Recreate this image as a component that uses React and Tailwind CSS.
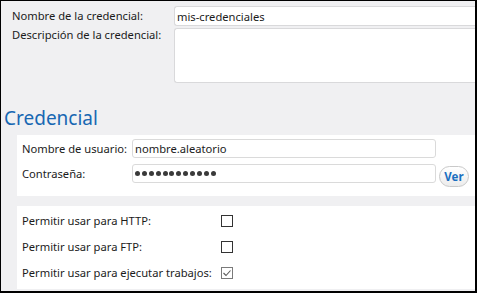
import { useState } from "react";

const font = { fontFamily: '"Noto Sans", "Open Sans", sans-serif' };

function Check({ checked }) {
  return (
    <span
      className={`flex h-[12px] w-[12px] items-center justify-center bg-white border ${
        checked ? "border-[#7a7a7a]" : "border-[#333333]"
      }`}
    >
      {checked && (
        <svg width="10" height="10" viewBox="0 0 10 10" fill="none">
          <polyline points="1.5,5 4,7.5 8.5,2.5" stroke="#5a5a5a" strokeWidth="1.1" />
        </svg>
      )}
    </span>
  );
}

export default function App() {
  const [perms] = useState([
    { label: "Permitir usar para HTTP:", checked: false },
    { label: "Permitir usar para FTP:", checked: false },
    { label: "Permitir usar para ejecutar trabajos:", checked: true },
  ]);

  return (
    <div
      className="w-[477px] h-[293px] overflow-hidden bg-[#f0f0f2] border-t border-l border-r-2 border-b-2 border-black text-[11.2px] text-[#1b1b1b] whitespace-nowrap"
      style={font}
    >
      {/* CREDENTIAL NAME + DESCRIPTION */}
      <div className="pt-[5px]">
        <div className="flex items-center h-[20px]">
          <span className="w-[173px] pl-[11px] leading-[20px]">Nombre de la credencial:</span>
          <input
            readOnly
            defaultValue="mis-credenciales"
            className="flex-1 h-[20px] bg-white border border-r-0 border-[#d9d9db] rounded-l-[3px] pl-[2px] outline-none leading-[18px]"
          />
        </div>

        <div className="flex mt-[2px]">
          <span className="w-[173px] pl-[11px] leading-[16px] -mt-[1px]">Descripción de la credencial:</span>
          <textarea
            readOnly
            className="flex-1 h-[55px] bg-white border border-r-0 border-[#d9d9db] rounded-l-[3px] outline-none resize-none"
          />
        </div>
      </div>

      {/* CREDENCIAL */}
      <h2 className="mt-[23px] pl-[3px] text-[19px] leading-[24px] text-[#1767b2]">Credencial</h2>

      <div className="mt-[5px] ml-[16px] bg-white pt-[4px] pb-[9px] pl-[5px]">
        <div className="flex items-center">
          <span className="w-[110px] leading-[19px]">Nombre de usuario:</span>
          <input
            readOnly
            defaultValue="nombre.aleatorio"
            className="w-[304px] h-[19px] border border-[#dadada] rounded-[3px] pl-[2px] outline-none leading-[17px]"
          />
        </div>

        <div className="flex items-start mt-[6px]">
          <span className="w-[110px] leading-[19px]">Contraseña:</span>
          <div className="w-[304px] h-[19px] border border-[#dadada] rounded-[3px] pl-[2px] flex items-center gap-[1.9px]">
            {Array.from({ length: 12 }).map((_, i) => (
              <span key={i} className="w-[5px] h-[5px] rounded-full bg-[#3a3a3a]" />
            ))}
          </div>
          <button className="ml-[3px] mt-[2px] w-[30px] h-[21px] rounded-full border border-[#c9c9c9] bg-gradient-to-b from-white to-[#ececec] text-[11.5px] font-bold leading-[19px] text-[#1a6fc0]">
            Ver
          </button>
        </div>
      </div>

      {/* PERMISSIONS */}
      <div className="mt-[10px] ml-[16px] bg-white pt-[2px] pb-[3px] pl-[5px]">
        {perms.map((p) => (
          <div key={p.label} className="flex items-center h-[26px]">
            <span className="w-[199px]">{p.label}</span>
            <Check checked={p.checked} />
          </div>
        ))}
      </div>
    </div>
  );
}
